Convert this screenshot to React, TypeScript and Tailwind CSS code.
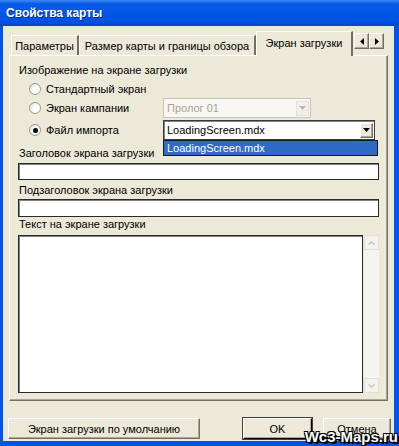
import React from "react";

const FONT = "font-['Liberation_Sans',Arial,sans-serif]";

function Radio({ checked }: { checked?: boolean }) {
  return (
    <div className="w-[12px] h-[12px] rounded-full border border-[#9c9a8f] bg-[radial-gradient(circle_at_65%_65%,#ffffff_30%,#dcdad0_100%)] flex items-center justify-center">
      {checked && <div className="w-[5px] h-[5px] rounded-full bg-black" />}
    </div>
  );
}

function ComboArrow({ disabled }: { disabled?: boolean }) {
  return (
    <div
      className={
        "w-[13px] h-[15px] flex items-center justify-center border-t border-l border-b border-r " +
        (disabled
          ? "bg-[#f1f0ea] border-[#e4e2d8]"
          : "bg-[#ece9d8] border-t-white border-l-white border-r-[#716f64] border-b-[#716f64] shadow-[inset_-1px_-1px_0_#aca899]")
      }
    >
      <svg width="7" height="4" viewBox="0 0 7 4">
        <path d="M0 0h7L3.5 4z" fill={disabled ? "#b9b7ad" : "#000"} />
      </svg>
    </div>
  );
}

function Tab({ label, w, active }: { label: string; w: string; active?: boolean }) {
  if (active) {
    return (
      <div
        className={`${w} h-[25px] -mb-[1px] relative z-10 bg-[#ece9d8] border-t border-l border-white border-r-2 border-r-[#716f64] flex items-center justify-center pb-[3px] whitespace-nowrap`}
      >
        {label}
      </div>
    );
  }
  return (
    <div
      className={`${w} h-[20px] border-t border-l border-white border-r-2 border-r-[#716f64] flex items-center justify-center whitespace-nowrap`}
    >
      {label}
    </div>
  );
}

function TabArrow({ dir }: { dir: "l" | "r" }) {
  return (
    <div className="w-[15px] h-[16px] bg-[#ece9d8] border-t border-l border-white border-r border-b border-r-[#716f64] border-b-[#716f64] shadow-[inset_-1px_-1px_0_#aca899] flex items-center justify-center">
      <svg width="4" height="7" viewBox="0 0 4 7">
        <path d={dir === "l" ? "M4 0v7L0 3.5z" : "M0 0v7L4 3.5z"} fill="#000" />
      </svg>
    </div>
  );
}

function Button({ label, w, isDefault }: { label: string; w: string; isDefault?: boolean }) {
  return (
    <div
      className={`${w} h-[21px] flex items-center justify-center bg-[#ece9d8] border-t border-l border-white border-r border-b ${
        isDefault ? "border-r-black border-b-black outline outline-1 outline-[#404040]" : "border-r-[#716f64] border-b-[#716f64]"
      } shadow-[inset_-1px_-1px_0_#aca899]`}
    >
      {label}
    </div>
  );
}

function Field({ h }: { h: string }) {
  return <div className={`${h} bg-white border border-[#2a2a2a] shadow-[inset_1px_1px_0_#808080]`} />;
}

export default function App() {
  return (
    <div className={`w-[399px] h-[446px] bg-[#0054e3] flex flex-col overflow-hidden text-[11px] leading-[14px] text-black relative ${FONT}`}>
      {/* title bar */}
      <div className="h-[26px] shrink-0 bg-[linear-gradient(180deg,#3d8bf4_0%,#0a5be9_14%,#0256e5_55%,#0152e0_85%,#0046c8_100%)] flex items-center pl-[6px]">
        <span className="text-white font-bold text-[12px] [text-shadow:1px_1px_0_#0a2a8a]">
          Свойства карты
        </span>
      </div>

      {/* dialog body */}
      <div className="flex-1 ml-[3px] mr-[5px] mb-[5px] bg-[#ece9d8] flex flex-col">
        {/* tab strip */}
        <div className="mt-[5px] h-[24px] mx-[6px] flex items-end pl-[2px] relative">
          <Tab label="Параметры" w="w-[68px]" />
          <Tab label="Размер карты и границы обзора" w="w-[177px]" />
          <Tab label="Экран загрузки" w="w-[97px]" active />
          <div className="self-start mt-[2px] ml-[1px] flex">
            <TabArrow dir="l" />
            <TabArrow dir="r" />
          </div>
        </div>

        {/* tab panel */}
        <div className="mx-[6px] h-[346px] relative border-t border-l border-white border-r border-b border-r-[#716f64] border-b-[#716f64] shadow-[inset_-1px_-1px_0_#aca899] flex flex-col px-[8px] pt-[7px]">
          <div className="h-[14px] pl-[1px]">Изображение на экране загрузки</div>

          <div className="flex flex-col mt-[3px]">
            <div className="h-[18px] flex items-center pl-[11px] gap-[5px]">
              <Radio />
              <span>Стандартный экран</span>
            </div>
            <div className="h-[20px] flex items-center">
              <div className="w-[145px] flex items-center pl-[11px] gap-[5px]">
                <Radio />
                <span>Экран кампании</span>
              </div>
              <div className="w-[148px] h-[20px] bg-[#f7f6f1] border border-[#c9c7ba] flex items-center justify-between pl-[3px] pr-[1px] text-[#a6a496]">
                <span>Пролог 01</span>
                <ComboArrow disabled />
              </div>
            </div>
            <div className="h-[20px] mt-[2px] flex items-center">
              <div className="w-[145px] flex items-center pl-[11px] gap-[5px]">
                <Radio checked />
                <span>Файл импорта</span>
              </div>
              <div className="w-[212px] h-[20px] bg-white border border-[#3a3a3a] shadow-[inset_1px_1px_0_#808080] flex items-center justify-between pl-[3px] pr-[1px]">
                <span>LoadingScreen.mdx</span>
                <ComboArrow />
              </div>
            </div>
          </div>

          <div className="h-[14px] mt-[6px] pl-[1px]">Заголовок экрана загрузки</div>
          <div className="mt-[3px]">
            <Field h="h-[17px]" />
          </div>
          <div className="h-[14px] mt-[3px] pl-[1px]">Подзаголовок экрана загрузки</div>
          <div className="mt-[2px]">
            <Field h="h-[18px]" />
          </div>
          <div className="h-[14px] pl-[1px]">Текст на экране загрузки</div>

          <div className="mt-[4px] h-[158px] flex">
            <div className="flex-1 bg-white border border-[#2a2a2a] shadow-[inset_1px_1px_0_#808080]" />
            <div className="w-[15px] ml-[1px] bg-[#f5f4ef] flex flex-col justify-between">
              <div className="h-[15px] border border-[#e2e0d6] bg-[#f3f2ec] flex items-center justify-center">
                <svg width="7" height="4" viewBox="0 0 7 4">
                  <path d="M0.5 3.5L3.5 0.8L6.5 3.5" stroke="#c4c2b8" fill="none" strokeWidth="1.2" />
                </svg>
              </div>
              <div className="h-[15px] border border-[#e2e0d6] bg-[#f3f2ec] flex items-center justify-center">
                <svg width="7" height="4" viewBox="0 0 7 4">
                  <path d="M0.5 0.5L3.5 3.2L6.5 0.5" stroke="#c4c2b8" fill="none" strokeWidth="1.2" />
                </svg>
              </div>
            </div>
          </div>

          {/* open dropdown list */}
          <div className="absolute left-[153px] top-[84px] w-[215px] h-[16px] bg-[#316ac5] border border-[#1b1b1b] text-white flex items-center pl-[3px] z-20">
            LoadingScreen.mdx
          </div>
        </div>

        {/* bottom buttons */}
        <div className="mt-[17px] flex items-center pl-[5px]">
          <Button label="Экран загрузки по умолчанию" w="w-[192px]" />
          <div className="ml-[43px]">
            <Button label="OK" w="w-[69px]" isDefault />
          </div>
          <div className="ml-[11px]">
            <Button label="Отмена" w="w-[68px]" />
          </div>
        </div>
      </div>

      {/* site watermark */}
      <div className="absolute right-[1px] bottom-[1px] text-white font-bold text-[15px] leading-[17px] [text-shadow:-1px_-1px_0_#000,1px_-1px_0_#000,-1px_1px_0_#000,1px_1px_0_#000,2px_2px_0_#000]">
        Wc3-Maps.ru
      </div>
    </div>
  );
}
